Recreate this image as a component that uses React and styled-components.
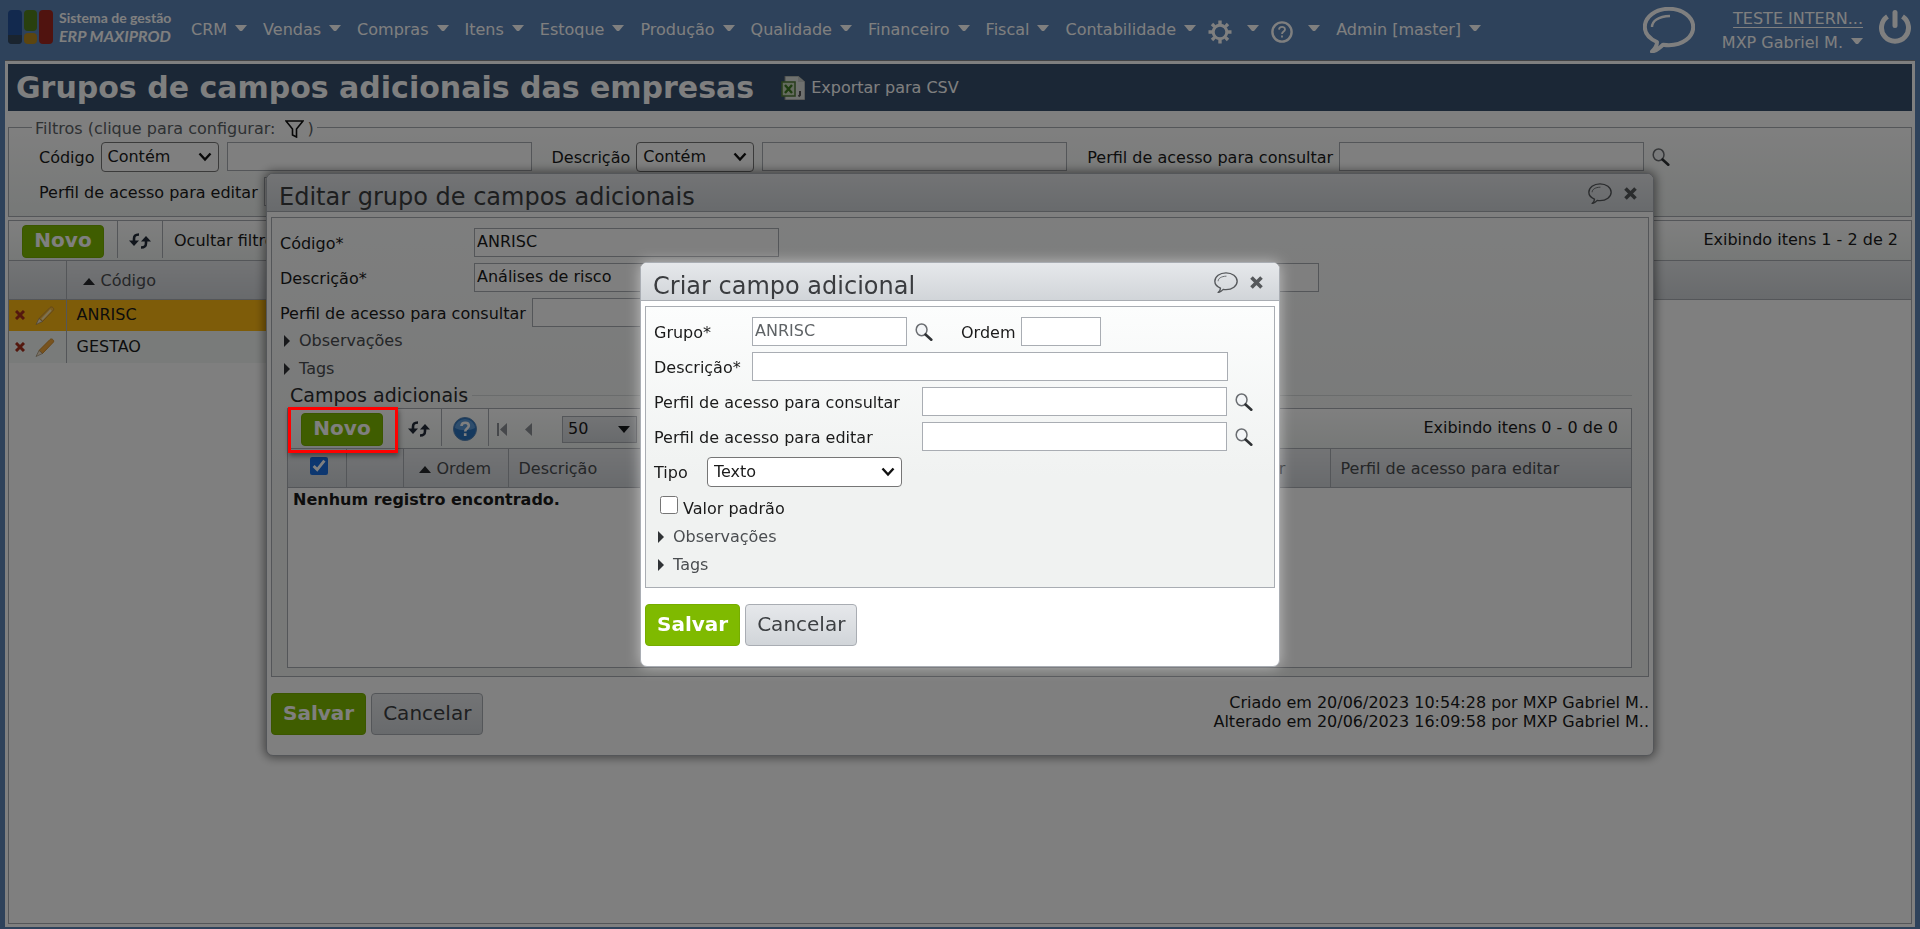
import React from 'react'
import styled, { createGlobalStyle } from 'styled-components'


const line = '#a9adb3';
const softFill = 'linear-gradient(#ffffff, #edf1ef)';
const barFill = 'linear-gradient(#e6e8eb, #d1d5d9)';

const GlobalStyle = createGlobalStyle`
  * {
    box-sizing: border-box;
  }
  body {
    margin: 0;
    font-family: 'DejaVu Sans', Verdana, sans-serif;
    font-size: 16px;
    line-height: 20px;
    color: #1a1a1a;
  }
  button, input, select {
    margin: 0;
    font: inherit;
    color: inherit;
  }
  svg {
    display: block;
    flex: none;
  }
`;

/* page frame */

const Page = styled.div`
  position: relative;
  display: flex;
  flex-direction: column;
  min-height: 100vh;
  padding: 0 5px 2px;
  background: #5c84b6;
`;

const TopBar = styled.header`
  display: flex;
  align-items: center;
  height: 60px;
  padding: 0 4px 0 3px;
  color: #fff;
`;

const Brand = styled.a`
  display: flex;
  align-items: center;
  gap: 6px;
  width: 183px;
  padding-bottom: 6px;
  color: #fff;
  font: bold 14px/18px Lato, sans-serif;
  text-decoration: none;
`;

const BrandName = styled.div`
  font-size: 16px;
  font-style: italic;
`;

const Menu = styled.nav`
  display: flex;
  align-items: center;
  gap: 16px;
  flex: 1;
`;

const MenuItem = styled.button`
  display: flex;
  align-items: center;
  gap: 8px;
  height: 28px;
  padding: 0;
  border: 0;
  background: none;
  white-space: nowrap;
  cursor: pointer;
`;

const MenuIcon = styled(MenuItem)`
  gap: 15px;
  margin-left: -4px;
  svg:first-child {
    margin-top: 3px;
  }
`;

const Account = styled.div`
  display: flex;
  align-items: center;
`;

const AccountNames = styled.div`
  display: flex;
  flex-direction: column;
  align-items: flex-end;
  width: 168px;
  margin-right: 16px;
  padding-top: 5px;
`;

const AccountLink = styled.a`
  color: #fff;
  text-underline-offset: 3px;
`;

const IconButton = styled.button`
  display: flex;
  align-items: center;
  padding: 0;
  border: 0;
  background: none;
  color: inherit;
  cursor: pointer;
`;

const PowerButton = styled(IconButton)`
  padding-bottom: 6px;
`;

const Main = styled.main`
  display: flex;
  flex-direction: column;
  flex: 1;
  padding: 3px;
  border: solid #85878a;
  border-width: 1px 0 0;
  background: #fff;
`;

const TitleBar = styled.div`
  display: flex;
  align-items: center;
  gap: 27px;
  height: 47px;
  padding: 0 8px;
  background: #364e6c;
  color: #fff;
`;

const PageTitle = styled.h1`
  margin: 0;
  font-size: 30px;
  line-height: 40px;
`;

const ExportLink = styled.a`
  display: flex;
  align-items: center;
  gap: 6px;
  color: #fff;
  text-decoration: none;
`;

/* form pieces */

const Filters = styled.fieldset`
  min-width: 0;
  margin: 6px 0 3px;
  padding: 5px 30px 10px;
  border: 1px solid ${line};
  background: ${softFill};
`;

const FiltersLegend = styled.legend`
  display: flex;
  align-items: center;
  gap: 6px;
  height: 20px;
  margin-left: -7px;
  padding: 3px 3px 0;
  color: #5c6266;
  svg {
    margin: 0 -3px 0 4px;
  }
`;

const Fields = styled.div`
  display: flex;
  flex-direction: column;
  gap: 6px;
`;

const FieldRow = styled.div`
  display: flex;
  align-items: center;
  height: 29px;
  gap: 8px;
`;

const Label = styled.label`
  width: ${p => (p.$width ? `${p.$width}px` : 'auto')};
  margin-left: ${p => p.$before || 0}px;
  margin-right: ${p => (p.$width ? -8 : -2)}px;
  padding-top: 3px;
  white-space: nowrap;
`;

const TextBox = styled.input`
  width: ${p => p.$width}px;
  height: 29px;
  padding: 0 2px 2px;
  border: 1px solid ${line};
  background: #fff;
  color: ${p => (p.readOnly ? '#5f6366' : 'inherit')};
`;

/* the arrow lies over the select's own right end */
const SelectBox = styled.div`
  position: relative;
  display: flex;
  align-items: center;
  svg {
    position: absolute;
    right: 7px;
    pointer-events: none;
  }
`;

const Select = styled.select`
  width: ${p => p.$width}px;
  height: 30px;
  padding: 0 6px;
  border: 1px solid #767676;
  border-radius: 4px;
  background: #fff;
  appearance: none;
`;

const CheckRow = styled.div`
  display: flex;
  align-items: center;
  gap: 5px;
  height: 37px;
  padding-left: 6px;
  label {
    padding-top: 9px;
  }
`;

const Check = styled.input`
  width: 18px;
  height: 18px;
  accent-color: #1a6fe0;
`;

const Toggle = styled.button`
  display: flex;
  align-items: center;
  gap: 9px;
  height: 28px;
  padding: 0 4px;
  border: 0;
  background: none;
  color: #4a4d50;
  cursor: pointer;
`;

const PrimaryButton = styled.button`
  height: 42px;
  padding: 0 11px 2px;
  border: 1px solid #76ad00;
  border-radius: 4px;
  background: #7fba00;
  color: #fff;
  font-size: 20px;
  font-weight: bold;
  cursor: pointer;
`;

const PlainButton = styled(PrimaryButton)`
  border-color: ${line};
  background: ${barFill};
  color: #3c3f42;
  font-weight: normal;
`;

const NewButton = styled(PrimaryButton)`
  height: 33px;
  width: 82px;
  padding: 0 0 2px;
`;

/* grids */

const Grid = styled.section`
  display: flex;
  flex-direction: column;
  flex: ${p => (p.$fill ? 1 : 'none')};
  min-height: ${p => (p.$fill ? 0 : 260)}px;
  margin: ${p => (p.$fill ? 0 : '0 8px 0 7px')};
  border: 1px solid ${line};
  background: #fff;
`;

const Toolbar = styled.div`
  display: flex;
  align-items: flex-start;
  height: 40px;
  border-bottom: 1px solid ${line};
  background: ${softFill};
`;

const Tool = styled.div`
  position: relative;
  display: flex;
  align-items: center;
  height: 37px;
  padding: 3px ${p => (p.$first ? 13 : 11)}px 0;
  border-left: ${p => (p.$first ? 0 : 1)}px solid ${line};
`;

const Pager = styled(Tool)`
  gap: 18px;
  padding-left: 8px;
  color: #8d9196;
`;

/* sits above the shade, round the button that the step points at */
const Marker = styled.div`
  position: absolute;
  z-index: 30;
  top: -2px;
  left: 0;
  width: 110px;
  height: 46px;
  border: 3px solid #f00;
  box-shadow: 1px 3px 5px rgba(0, 0, 0, .4);
  pointer-events: none;
`;

const PageSize = styled(SelectBox)`
  margin-left: 12px;
  color: #1a1a1a;
`;

const PageSizeSelect = styled(Select)`
  height: 27px;
  padding: 0 5px;
  border-color: ${line};
  border-radius: 0;
  background: ${barFill};
`;

const Count = styled.div`
  margin-left: auto;
  padding: 9px 13px 0 0;
`;

const Table = styled.table`
  width: 100%;
  table-layout: fixed;
  border-collapse: collapse;
`;

const Th = styled.th`
  width: ${p => (p.$width ? `${p.$width}px` : 'auto')};
  height: 38px;
  padding: 2px 0 0 ${p => p.$indent || 10}px;
  border-left: ${p => (p.$open ? 0 : 1)}px solid ${line};
  border-bottom: 1px solid ${line};
  background: ${barFill};
  color: #4a4d50;
  font-weight: normal;
  text-align: left;
  white-space: nowrap;
  &:first-child {
    border-left: 0;
  }
`;

const SortLabel = styled.span`
  display: flex;
  align-items: center;
  gap: 6px;
`;

const Td = styled.td`
  height: 32px;
  padding: 0 0 0 10px;
  border-left: 1px solid ${line};
  background: ${p => (p.$selected ? '#fdb913' : '#f3f7f5')};
  &:first-child {
    padding-left: 6px;
    border-left: 0;
  }
`;

const RowActions = styled.div`
  display: flex;
  align-items: center;
  gap: 10px;
`;

const Empty = styled.p`
  margin: 2px 5px;
  font-weight: bold;
`;

/* dialogs */

const Layer = styled.div`
  position: absolute;
  inset: 0;
  display: grid;
  place-items: center;
`;

const Shade = styled.div`
  position: fixed;
  z-index: 20;
  inset: 0;
  background: rgba(0, 0, 0, .5);
`;

const FrontLayer = styled(Layer)`
  z-index: 40;
`;

const Dialog = styled.div`
  width: min(${p => p.$width}px, 96%);
  border: 1px solid ${line};
  border-radius: 7px;
  background: #fff;
  box-shadow: ${p => (p.$front ? '0 0 14px rgba(255, 255, 255, .5)' : '0 0 10px 2px rgba(0, 0, 0, .45)')};
`;

const DialogHead = styled.div`
  display: flex;
  align-items: center;
  gap: 12px;
  height: 38px;
  padding: 2px 16px 0 12px;
  border-bottom: 1px solid ${line};
  border-radius: 6px 6px 0 0;
  background: ${barFill};
  color: #55585b;
`;

const DialogTitle = styled.h2`
  flex: 1;
  margin: 0;
  padding-top: 6px;
  color: #3a3c3f;
  font-size: 24px;
  font-weight: normal;
  line-height: 30px;
`;

const Panel = styled.div`
  margin: 5px 4px 16px;
  padding: 10px 8px 8px;
  border: 1px solid ${line};
  background: linear-gradient(#fcfdfd, #f0f2f1 60%);
`;

const SectionTitle = styled.h3`
  display: flex;
  align-items: center;
  gap: 4px;
  margin: 0 8px 0 7px;
  padding-left: 3px;
  color: #2c2e30;
  font-size: 19px;
  font-weight: normal;
  line-height: 25px;
  &::after {
    content: '';
    flex: 1;
    border-top: 1px solid #d5d8d8;
  }
`;

const DialogFoot = styled.div`
  display: flex;
  align-items: flex-start;
  gap: 5px;
  padding: 0 4px 20px;
`;

const Audit = styled.p`
  margin: 0 0 0 auto;
  line-height: 19px;
  text-align: right;
`;

/* icons */

const Caret = () => (
  <svg width="12" height="12" viewBox="0 0 12 12">
    <path d="M0 1h12L7 7H5z" fill="#fff" />
  </svg>
)

const Chevron = () => (
  <svg width="14" height="10" viewBox="0 0 14 10" fill="none" stroke="#111" strokeWidth="2.4">
    <path d="M1.500 1.500L7 7.500l5.500-6" />
  </svg>
)

const Logo = () => (
  <svg width="45" height="34" viewBox="0 0 45 34">
    <rect width="14" height="34" rx="4" fill="#24539c" />
    <path d="M0 25h14v5a4 4 0 0 1-4 4H4a4 4 0 0 1-4-4z" fill="#34485f" />
    <rect x="16" width="13" height="21" rx="4" fill="#53801c" />
    <rect x="16" y="23" width="13" height="11" rx="4" fill="#b98a1e" />
    <rect x="31" width="14" height="34" rx="4" fill="#a0261f" />
  </svg>
)

const Gear = () => (
  <svg width="24" height="24" viewBox="0 0 24 24" fill="none" stroke="#fff">
    <circle cx="12" cy="12" r="6.8" strokeWidth="3" />
    <path
      d="M12 .5v4M12 19.500v4M.5 12h4M19.500 12h4M4 4l2.600 2.600M17.400 17.400l2.600 2.600M4 20l2.600-2.600M17.400 6.600l2.600-2.600"
      strokeWidth="3.4"
    />
  </svg>
)

const HelpRing = () => (
  <svg width="22" height="22" viewBox="0 0 22 22" fill="none" stroke="#fff">
    <circle cx="11" cy="11" r="9.600" strokeWidth="2.400" />
    <path d="M8 8.600c.2-3.600 6-3.400 6-.2 0 2-3 2.200-3 4.600M11 14.600v2" strokeWidth="1.800" />
  </svg>
)

const Bubble = ({ size, weight }) => (
  <svg width={size} height={size * 46 / 52} viewBox="0 0 52 46" fill="none" stroke="currentColor" strokeWidth={weight}>
    <path d="M14 35C6 31.500 1.800 26 1.800 20 1.800 9.800 12.500 1.800 26 1.800S50.200 9.800 50.200 20 39.500 38.200 26 38.200c-2 0-4-.2-6-.5-3 3.300-6 5.800-11 6.800 3-2.800 5-6 5-9.500z" strokeLinejoin="round" />
    <path d="M9 20c0-6 6-10.500 18-11" strokeWidth={weight * 0.6} />
  </svg>
)

const Power = () => (
  <svg width="32" height="34" viewBox="0 0 32 34" fill="none" stroke="#fff" strokeWidth="5">
    <path d="M8.500 6.500a13.500 13.500 0 1 0 15 0" />
    <path d="M16 2.500v13" strokeLinecap="round" />
  </svg>
)

const Sheet = () => (
  <svg width="24" height="24" viewBox="0 0 24 24">
    <path d="M4 0h13l7 6v18H4z" fill="#dfe2df" stroke="#8c918c" />
    <path d="M17 0v6h7" fill="#c6cac6" />
    <rect x="1" y="6" width="13" height="14" fill="#c9d6bd" stroke="#567f3c" strokeWidth="1.600" />
    <path d="M4 9l7 8M11 9l-7 8" stroke="#3f7a22" strokeWidth="2.400" />
    <path d="M19 15v4l-1.500 1.500" stroke="#555" strokeWidth="2" fill="none" />
  </svg>
)

const Funnel = () => (
  <svg width="19" height="18" viewBox="0 0 19 18" fill="none" stroke="#111" strokeWidth="1.600">
    <path d="M1 1h17l-6.500 8v8l-4-2V9z" />
  </svg>
)

const Magnifier = () => (
  <svg width="18" height="18" viewBox="0 0 18 18" fill="none">
    <ellipse cx="6.600" cy="6.800" rx="5.400" ry="5.900" fill="#f3f5f7" stroke="#6a6d71" strokeWidth="1.500" />
    <path d="M10.500 11.500l5.800 5.200" stroke="#2f3235" strokeWidth="2.600" strokeLinecap="round" />
  </svg>
)

const Refresh = () => (
  <svg width="22" height="16" viewBox="0 0 22 16" fill="none" stroke="#222b38" strokeWidth="2.600">
    <path d="M10 1.500C6 1.500 5 3 5 6v3" />
    <path d="M0 7.500h10L5 13z" fill="#222b38" stroke="none" />
    <path d="M12 14.500c4 0 5-1.500 5-4.500V7" />
    <path d="M12 8.500h10L17 3z" fill="#222b38" stroke="none" />
  </svg>
)

const HelpBall = () => (
  <svg width="24" height="24" viewBox="0 0 24 24" fill="none">
    <circle cx="12" cy="12" r="11.500" fill="#2a72bd" stroke="#5a86b4" />
    <path d="M2 11a10 9 0 0 1 20 0c-6 3-14 3-20 0z" fill="#5d9bd8" />
    <path d="M8.500 9c.2-4.400 7.300-4.200 7.300-.2 0 2.600-3.600 2.700-3.600 5.600M12.200 16.200v2.800" stroke="#fff" strokeWidth="2.600" />
  </svg>
)

const Close = () => (
  <svg width="13" height="13" viewBox="0 0 13 13" stroke="currentColor" strokeWidth="3.600">
    <path d="M1.500 1.500l10 10M11.500 1.500l-10 10" />
  </svg>
)

const Remove = () => (
  <svg width="10" height="10" viewBox="0 0 10 10" stroke="#a8301c" strokeWidth="3">
    <path d="M1 1l8 8M9 1L1 9" />
  </svg>
)

const Pencil = ({ pale }) => (
  <svg width="20" height="19" viewBox="0 0 20 19">
    <path d="M4 12.500L15 1.500c1.500-1.500 4.500.5 3.500 2.500L7.500 15.500z" fill={pale ? '#f5b93e' : '#f0a63c'} stroke={pale ? '#c58f33' : '#d08d2c'} />
    <path d="M4 12.500L1 18.500l6.500-3z" fill="#f4e3c8" stroke="#8f7a5c" strokeWidth=".6" />
    {pale && <path d="M7 13.500L16 4" stroke="#fbe3a8" strokeWidth="2" />}
  </svg>
)

const SortUp = () => (
  <svg width="12" height="8" viewBox="0 0 12 8">
    <path d="M6 1l6 7H0z" fill="#26292c" />
  </svg>
)

const PointRight = () => (
  <svg width="6" height="12" viewBox="0 0 6 12">
    <path d="M0 0l6 6-6 6z" fill="#303336" />
  </svg>
)

const PointDown = () => (
  <svg width="12" height="7" viewBox="0 0 12 7">
    <path d="M0 0h12L6 7z" fill="#15181b" />
  </svg>
)

const FirstPage = () => (
  <svg width="10" height="13" viewBox="0 0 10 13" fill="currentColor">
    <path d="M0 0h2v13H0zM10 0v13L3 6.500z" />
  </svg>
)

const PrevPage = () => (
  <svg width="7" height="13" viewBox="0 0 7 13" fill="currentColor">
    <path d="M7 0v13L0 6.500z" />
  </svg>
)

/* data */

const modules = [
  'CRM', 'Vendas', 'Compras', 'Itens', 'Estoque', 'Produção',
  'Qualidade', 'Financeiro', 'Fiscal', 'Contabilidade'
];

const groups = [
  { code: 'ANRISC', selected: true },
  { code: 'GESTAO', selected: false }
];

/* composed parts */

const Choice = ({ width, option, ...rest }) => (
  <SelectBox>
    <Select $width={width} {...rest}><option>{option}</option></Select>
    <Chevron />
  </SelectBox>
)

const Lookup = ({ label }) => (
  <IconButton type="button" aria-label={label}>
    <Magnifier />
  </IconButton>
)

const Toggles = () => (
  <>
    <Toggle type="button"><PointRight />Observações</Toggle>
    <Toggle type="button"><PointRight />Tags</Toggle>
  </>
)

const DialogHeader = ({ title }) => (
  <DialogHead>
    <DialogTitle>{title}</DialogTitle>
    <IconButton type="button" aria-label="Chat"><Bubble size={24} weight={3} /></IconButton>
    <IconButton type="button" aria-label="Fechar"><Close /></IconButton>
  </DialogHead>
)

const Header = () => (
  <TopBar>
    <Brand href="#">
      <Logo />
      <div>
        <div>Sistema de gestão</div>
        <BrandName>ERP MAXIPROD</BrandName>
      </div>
    </Brand>
    <Menu>
      {modules.map(name => (
        <MenuItem key={name} type="button">{name}<Caret /></MenuItem>
      ))}
      <MenuIcon type="button" aria-label="Configurações"><Gear /><Caret /></MenuIcon>
      <MenuIcon type="button" aria-label="Ajuda"><HelpRing /><Caret /></MenuIcon>
      <MenuItem type="button">Admin [master]<Caret /></MenuItem>
    </Menu>
    <Account>
      <IconButton type="button" aria-label="Chat"><Bubble size={52} weight={4} /></IconButton>
      <AccountNames>
        <AccountLink href="#">TESTE INTERN...</AccountLink>
        <MenuItem type="button">MXP Gabriel M.<Caret /></MenuItem>
      </AccountNames>
      <PowerButton type="button" aria-label="Sair"><Power /></PowerButton>
    </Account>
  </TopBar>
)

const FilterForm = () => (
  <Filters>
    <FiltersLegend>Filtros (clique para configurar: <Funnel />)</FiltersLegend>
    <Fields>
      <FieldRow>
        <Label htmlFor="f-codigo">Código</Label>
        <Choice width={118} option="Contém" aria-label="Operador do código" />
        <TextBox id="f-codigo" $width={305} />
        <Label htmlFor="f-descricao" $before={12}>Descrição</Label>
        <Choice width={118} option="Contém" aria-label="Operador da descrição" />
        <TextBox id="f-descricao" $width={305} />
        <Label htmlFor="f-consultar" $before={12}>Perfil de acesso para consultar</Label>
        <TextBox id="f-consultar" $width={305} />
        <Lookup label="Buscar perfil para consultar" />
      </FieldRow>
      <FieldRow>
        <Label htmlFor="f-editar">Perfil de acesso para editar</Label>
        <TextBox id="f-editar" $width={305} />
        <Lookup label="Buscar perfil para editar" />
      </FieldRow>
    </Fields>
  </Filters>
)

const GroupsGrid = () => (
  <Grid $fill>
    <Toolbar>
      <Tool $first><NewButton type="button">Novo</NewButton></Tool>
      <Tool><IconButton type="button" aria-label="Atualizar"><Refresh /></IconButton></Tool>
      <Tool><IconButton type="button">Ocultar filtros</IconButton></Tool>
      <Count>Exibindo itens 1 - 2 de 2</Count>
    </Toolbar>
    <Table>
      <thead>
        <tr>
          <Th $width={57} />
          <Th $width={640} $indent={16}><SortLabel><SortUp />Código</SortLabel></Th>
          <Th $open />
        </tr>
      </thead>
      <tbody>
        {groups.map(({ code, selected }) => (
          <tr key={code}>
            <Td $selected={selected}>
              <RowActions>
                <IconButton type="button" aria-label={`Excluir ${code}`}><Remove /></IconButton>
                <IconButton type="button" aria-label={`Editar ${code}`}><Pencil pale={selected} /></IconButton>
              </RowActions>
            </Td>
            <Td $selected={selected}>{code}</Td>
          </tr>
        ))}
      </tbody>
    </Table>
  </Grid>
)

const FieldsGrid = () => (
  <Grid>
    <Toolbar>
      <Tool $first>
        <NewButton type="button">Novo</NewButton>
        <Marker />
      </Tool>
      <Tool><IconButton type="button" aria-label="Atualizar"><Refresh /></IconButton></Tool>
      <Tool><IconButton type="button" aria-label="Ajuda"><HelpBall /></IconButton></Tool>
      <Pager>
        <IconButton type="button" aria-label="Primeira página"><FirstPage /></IconButton>
        <IconButton type="button" aria-label="Página anterior"><PrevPage /></IconButton>
        <PageSize>
          <PageSizeSelect $width={75} aria-label="Itens por página"><option>50</option></PageSizeSelect>
          <PointDown />
        </PageSize>
      </Pager>
      <Count>Exibindo itens 0 - 0 de 0</Count>
    </Toolbar>
    <Table>
      <thead>
        <tr>
          <Th $width={58} $indent={22}><Check type="checkbox" defaultChecked aria-label="Selecionar todos" /></Th>
          <Th $width={57} />
          <Th $width={105} $indent={15}><SortLabel><SortUp />Ordem</SortLabel></Th>
          <Th>Descrição</Th>
          <Th $width={301}>Perfil de acesso para consultar</Th>
          <Th $width={301}>Perfil de acesso para editar</Th>
        </tr>
      </thead>
    </Table>
    <Empty>Nenhum registro encontrado.</Empty>
  </Grid>
)

const EditGroupDialog = () => (
  <Dialog $width={1388} role="dialog" aria-label="Editar grupo de campos adicionais">
    <DialogHeader title="Editar grupo de campos adicionais" />
    <Panel>
      <Fields>
        <FieldRow>
          <Label htmlFor="g-codigo" $width={194}>Código*</Label>
          <TextBox id="g-codigo" $width={305} defaultValue="ANRISC" />
        </FieldRow>
        <FieldRow>
          <Label htmlFor="g-descricao" $width={194}>Descrição*</Label>
          <TextBox id="g-descricao" $width={845} defaultValue="Análises de risco" />
        </FieldRow>
        <FieldRow>
          <Label htmlFor="g-consultar">Perfil de acesso para consultar</Label>
          <TextBox id="g-consultar" $width={305} />
          <Lookup label="Buscar perfil para consultar" />
        </FieldRow>
      </Fields>
      <Toggles />
      <SectionTitle>Campos adicionais</SectionTitle>
      <FieldsGrid />
    </Panel>
    <DialogFoot>
      <PrimaryButton type="button">Salvar</PrimaryButton>
      <PlainButton type="button">Cancelar</PlainButton>
      <Audit>
        Criado em 20/06/2023 10:54:28 por MXP Gabriel M..<br />
        Alterado em 20/06/2023 16:09:58 por MXP Gabriel M..
      </Audit>
    </DialogFoot>
  </Dialog>
)

const CreateFieldDialog = () => (
  <Dialog $width={640} $front role="dialog" aria-label="Criar campo adicional">
    <DialogHeader title="Criar campo adicional" />
    <Panel>
      <Fields>
        <FieldRow>
          <Label htmlFor="c-grupo" $width={98}>Grupo*</Label>
          <TextBox id="c-grupo" $width={155} readOnly value="ANRISC" />
          <Lookup label="Buscar grupo" />
          <Label htmlFor="c-ordem" $before={20}>Ordem</Label>
          <TextBox id="c-ordem" $width={80} />
        </FieldRow>
        <FieldRow>
          <Label htmlFor="c-descricao" $width={98}>Descrição*</Label>
          <TextBox id="c-descricao" $width={476} />
        </FieldRow>
        <FieldRow>
          <Label htmlFor="c-consultar" $width={268}>Perfil de acesso para consultar</Label>
          <TextBox id="c-consultar" $width={305} />
          <Lookup label="Buscar perfil para consultar" />
        </FieldRow>
        <FieldRow>
          <Label htmlFor="c-editar" $width={268}>Perfil de acesso para editar</Label>
          <TextBox id="c-editar" $width={305} />
          <Lookup label="Buscar perfil para editar" />
        </FieldRow>
        <FieldRow>
          <Label htmlFor="c-tipo" $width={53}>Tipo</Label>
          <Choice id="c-tipo" width={195} option="Texto" />
        </FieldRow>
      </Fields>
      <CheckRow>
        <Check type="checkbox" id="c-padrao" />
        <Label htmlFor="c-padrao">Valor padrão</Label>
      </CheckRow>
      <Toggles />
    </Panel>
    <DialogFoot>
      <PrimaryButton type="button">Salvar</PrimaryButton>
      <PlainButton type="button">Cancelar</PlainButton>
    </DialogFoot>
  </Dialog>
)

const App = () => (
  <Page>
    <GlobalStyle />
    <Header />
    <Main>
      <TitleBar>
        <PageTitle>Grupos de campos adicionais das empresas</PageTitle>
        <ExportLink href="#"><Sheet />Exportar para CSV</ExportLink>
      </TitleBar>
      <FilterForm />
      <GroupsGrid />
    </Main>
    <Layer>
      <EditGroupDialog />
    </Layer>
    <Shade />
    <FrontLayer>
      <CreateFieldDialog />
    </FrontLayer>
  </Page>
)


export default App;
